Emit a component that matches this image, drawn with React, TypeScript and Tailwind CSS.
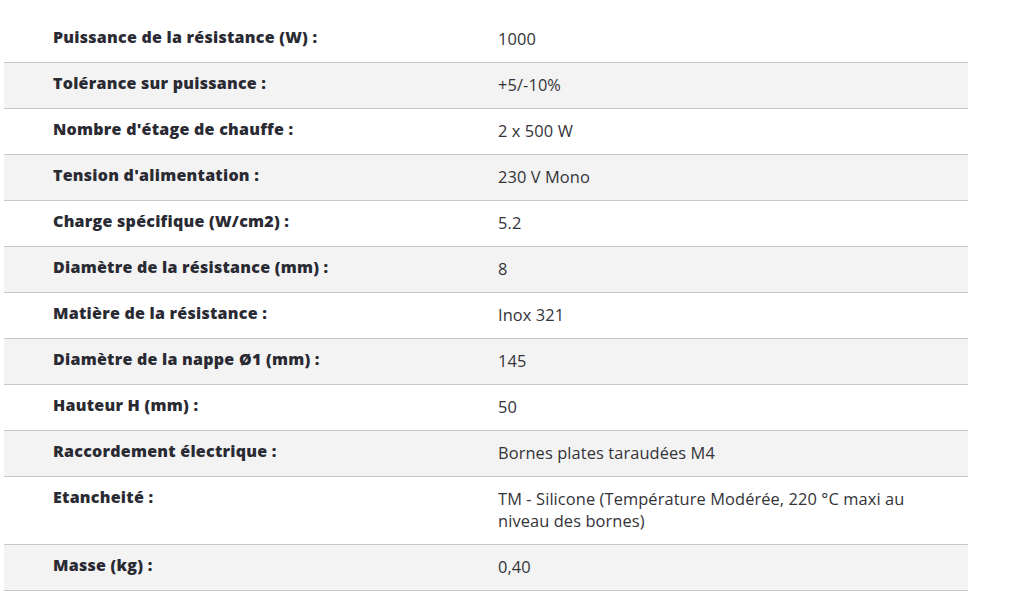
import React from "react";

const rows: [string, string][] = [
  ["Puissance de la résistance (W) :", "1000"],
  ["Tolérance sur puissance :", "+5/-10%"],
  ["Nombre d'étage de chauffe :", "2 x 500 W"],
  ["Tension d'alimentation :", "230 V Mono"],
  ["Charge spécifique (W/cm2) :", "5.2"],
  ["Diamètre de la résistance (mm) :", "8"],
  ["Matière de la résistance :", "Inox 321"],
  ["Diamètre de la nappe Ø1 (mm) :", "145"],
  ["Hauteur H (mm) :", "50"],
  ["Raccordement électrique :", "Bornes plates taraudées M4"],
  ["Etancheité :", "TM - Silicone (Température Modérée, 220 °C maxi au niveau des bornes)"],
  ["Masse (kg) :", "0,40"],
];

export default function App() {
  return (
    <div className="min-h-screen bg-white pt-[17px] pl-[4px] font-['Open_Sans',sans-serif]">
      <table className="w-[964px] table-fixed border-collapse">
        <tbody>
          {rows.map(([label, value], i) => (
            <tr
              key={label}
              className={
                (i % 2 === 1 ? "bg-[#f3f3f3] " : "bg-white ") +
                "border-b border-[#c8c8c8]"
              }
            >
              <td className="w-[494px] pl-[49px] pt-[9px] pb-[14px] align-top text-[16px] leading-[22px] font-extrabold tracking-[0.25px] text-[#2a2a33]">
                {label}
              </td>
              <td className="pt-[11px] pb-[12px] pr-[30px] align-top text-[16.4px] leading-[22px] tracking-[0.1px] text-[#333338]">
                {value}
              </td>
            </tr>
          ))}
        </tbody>
      </table>
    </div>
  );
}
